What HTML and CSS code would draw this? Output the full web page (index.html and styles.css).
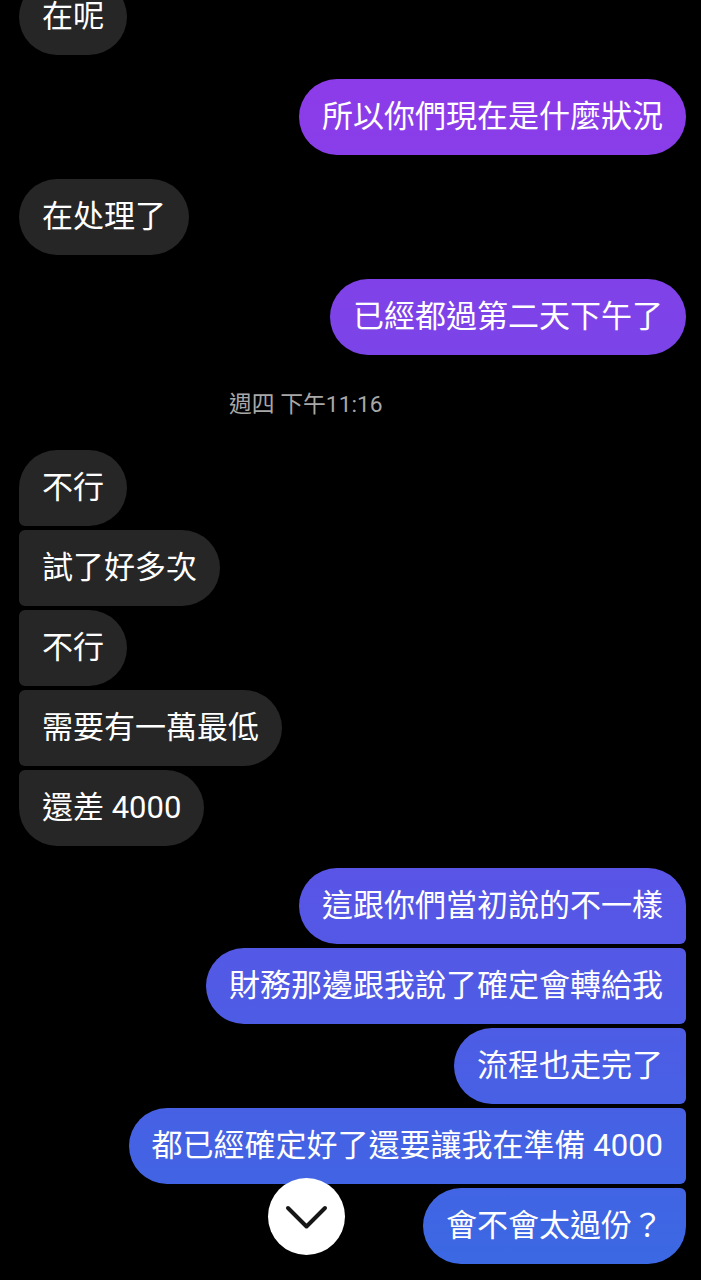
FILE: index.html
```html
<!DOCTYPE html>
<html lang="zh-Hant">
<head>
<meta charset="utf-8">
<title>Chat</title>
<link rel="stylesheet" href="styles.css">
</head>
<body>
<main class="chat">
  <div class="row in first"><div class="bubble">在呢</div></div>
  <div class="row out sep"><div class="bubble">所以你們現在是什麼狀況</div></div>
  <div class="row in sep"><div class="bubble">在处理了</div></div>
  <div class="row out sep"><div class="bubble">已經都過第二天下午了</div></div>

  <div class="time">週四 下午11:16</div>

  <div class="group in">
    <div class="row"><div class="bubble g-first">不行</div></div>
    <div class="row"><div class="bubble g-mid">試了好多次</div></div>
    <div class="row"><div class="bubble g-mid">不行</div></div>
    <div class="row"><div class="bubble g-mid">需要有一萬最低</div></div>
    <div class="row"><div class="bubble g-last">還差 4000</div></div>
  </div>

  <div class="group out group-sep">
    <div class="row"><div class="bubble g-first">這跟你們當初說的不一樣</div></div>
    <div class="row"><div class="bubble g-mid">財務那邊跟我說了確定會轉給我</div></div>
    <div class="row"><div class="bubble g-mid">流程也走完了</div></div>
    <div class="row"><div class="bubble g-mid">都已經確定好了還要讓我在準備 4000</div></div>
    <div class="row"><div class="bubble g-last">會不會太過份？</div></div>
  </div>
</main>

<button class="scroll-down" aria-label="scroll down">
  <svg width="77" height="77" viewBox="0 0 77 77" aria-hidden="true">
    <polyline points="20,30 38.5,48.5 57,30" fill="none" stroke="#161616" stroke-width="4" stroke-linecap="round" stroke-linejoin="round"/>
  </svg>
</button>
</body>
</html>
```

FILE: styles.css
```css
html, body {
  margin: 0;
  padding: 0;
  background: #000;
}

body {
  position: relative;
  width: 701px;
  height: 1280px;
  overflow: hidden;
  font-family: Roboto, "Noto Sans CJK TC", sans-serif;
  color: #fff;
}

.chat {
  display: flex;
  flex-direction: column;
  padding: 0 15px 0 19px;
}

.row {
  display: flex;
}

.row.in,
.group.in .row {
  justify-content: flex-start;
}

.row.out,
.group.out .row {
  justify-content: flex-end;
}

.first {
  margin-top: -21px;
}

.sep {
  margin-top: 24px;
}

.bubble {
  font-size: 31px;
  line-height: 36px;
  padding: 20px 23px;
  border-radius: 38px;
  white-space: nowrap;
}

.in .bubble {
  background: #262626;
}

.out .bubble {
  background: linear-gradient(180deg, #9239e9 0px, #5a54e6 860px, #3a69e3 1280px) fixed;
}

.group {
  display: flex;
  flex-direction: column;
  gap: 4px;
}

.group-sep {
  margin-top: 22px;
}

.group.in .g-first { border-bottom-left-radius: 6px; }
.group.in .g-mid { border-top-left-radius: 6px; border-bottom-left-radius: 6px; }
.group.in .g-last { border-top-left-radius: 6px; }

.group.out .g-first { border-bottom-right-radius: 6px; }
.group.out .g-mid { border-top-right-radius: 6px; border-bottom-right-radius: 6px; }
.group.out .g-last { border-top-right-radius: 6px; }

.time {
  margin: 37px 0 32px 210px;
  font-size: 22.8px;
  line-height: 26px;
  color: #a8a8a8;
}

.scroll-down {
  position: absolute;
  left: 268px;
  top: 1178px;
  width: 77px;
  height: 77px;
  padding: 0;
  border: none;
  border-radius: 50%;
  background: #fff;
  display: flex;
  align-items: center;
  justify-content: center;
}

.scroll-down svg {
  display: block;
}
```
